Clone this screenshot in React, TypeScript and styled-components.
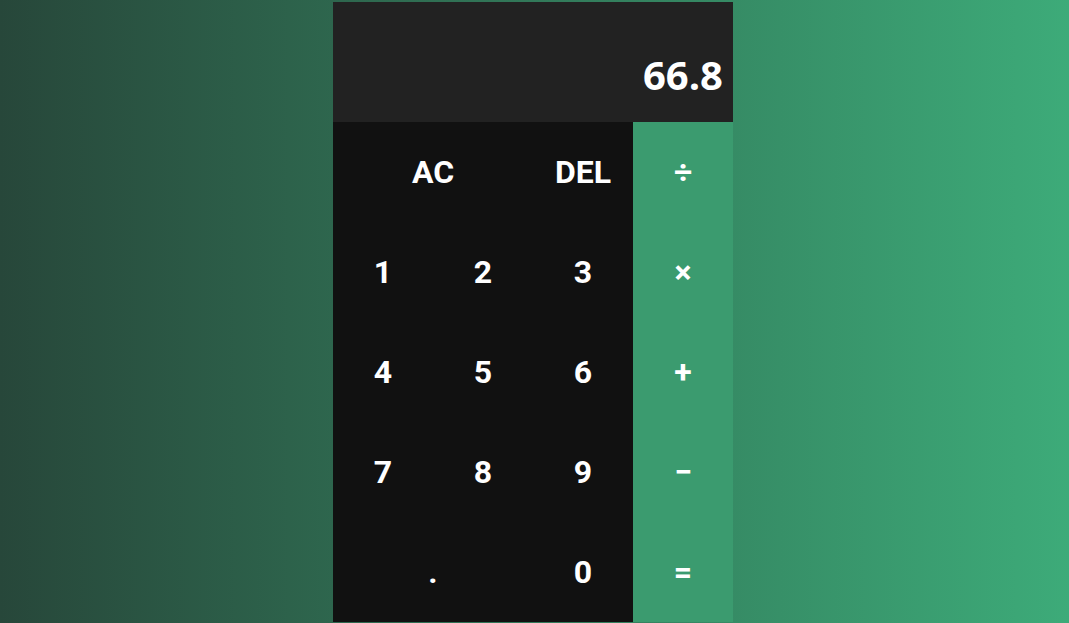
import React from "react";
import styled, { createGlobalStyle } from "styled-components";

const GlobalStyle = createGlobalStyle`
  *, *::before, *::after { box-sizing: border-box; }
  html, body { margin: 0; padding: 0; }
  body {
    background: linear-gradient(to right, #27473a, #3dab79);
    font-family: Roboto, "Liberation Sans", sans-serif;
  }
`;

const Page = styled.div`
  min-height: 100vh;
  display: flex;
  justify-content: center;
  padding: 2px 3px 0 0;
`;

const Calculator = styled.div`
  display: grid;
  grid-template-columns: repeat(4, 100px);
  grid-template-rows: 120px repeat(5, 100px);
`;

const Display = styled.div`
  grid-column: 1 / -1;
  background: #222222;
  color: #ffffff;
  display: flex;
  flex-direction: column;
  justify-content: flex-end;
  align-items: flex-end;
  padding: 0 10px 20px 10px;
`;

const Current = styled.div`
  font-family: "Open Sans", "Noto Sans", sans-serif;
  font-weight: 700;
  font-size: 40px;
  line-height: normal;
`;

const Key = styled.button<{ $op?: boolean; $span?: number }>`
  grid-column: span ${(p) => p.$span ?? 1};
  border: none;
  outline: none;
  margin: 0;
  padding: 0;
  cursor: pointer;
  background: ${(p) => (p.$op ? "#3b9b6f" : "#111111")};
  color: #ffffff;
  font-family: Roboto, "Liberation Sans", sans-serif;
  font-weight: 700;
  font-size: 32px;
  display: flex;
  align-items: center;
  justify-content: center;
`;

export default function App() {
  return (
    <>
      <GlobalStyle />
      <Page>
        <Calculator>
          <Display>
            <Current>66.8</Current>
          </Display>
          <Key $span={2}>AC</Key>
          <Key>DEL</Key>
          <Key $op>÷</Key>
          <Key>1</Key>
          <Key>2</Key>
          <Key>3</Key>
          <Key $op>×</Key>
          <Key>4</Key>
          <Key>5</Key>
          <Key>6</Key>
          <Key $op>+</Key>
          <Key>7</Key>
          <Key>8</Key>
          <Key>9</Key>
          <Key $op>−</Key>
          <Key $span={2}>.</Key>
          <Key>0</Key>
          <Key $op>=</Key>
        </Calculator>
      </Page>
    </>
  );
}
